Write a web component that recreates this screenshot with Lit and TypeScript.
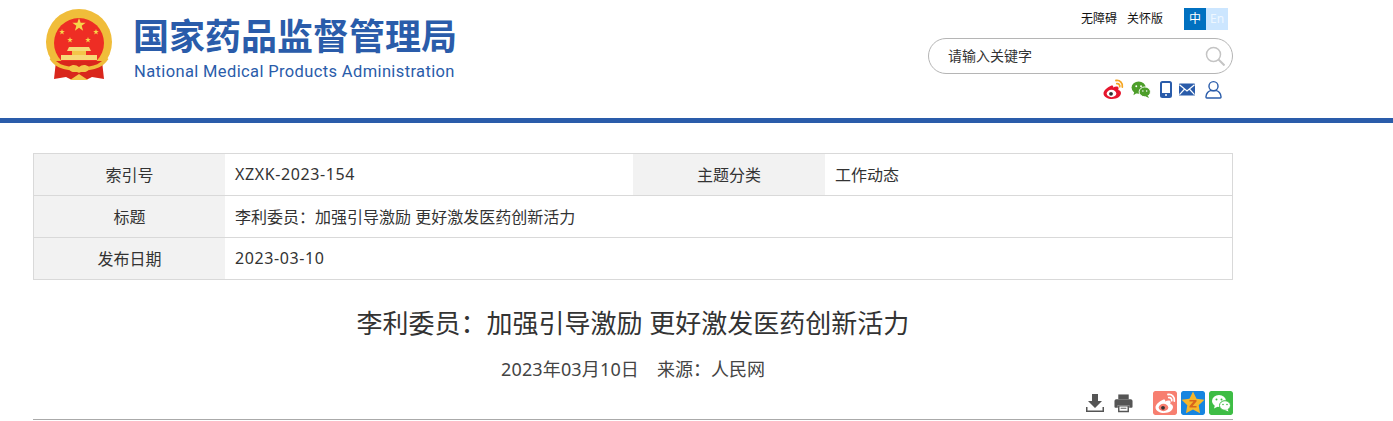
import { LitElement, html, css, svg } from "lit";
import { customElement } from "lit/decorators.js";

const COLON = "\uff1a";
const star = (cx: number, cy: number, r: number, fill: string, inner = 0.4) => {
  const pts: string[] = [];
  for (let i = 0; i < 10; i++) {
    const a = (-90 + i * 36) * Math.PI / 180;
    const rr = i % 2 ? r * inner : r;
    pts.push(`${(cx + rr * Math.cos(a)).toFixed(2)},${(cy + rr * Math.sin(a)).toFixed(2)}`);
  }
  return svg`<polygon points=${pts.join(" ")} fill=${fill}></polygon>`;
};

@customElement("app-root")
export class AppRoot extends LitElement {
  static styles = css`
    :host { display: block; width: 1393px; height: 421px; overflow: hidden; background: #fff;
      font-family: "Noto Sans", "Noto Sans CJK SC", sans-serif; color: #333; }
    .header { height: 118px; border-bottom: 5px solid #2a5caa; display: flex; justify-content: space-between; padding: 0 160px 0 45px; }
    .brand { display: flex; align-items: flex-start; gap: 21px; padding-top: 9px; }
    .emblem { display: block; width: 68px; height: 72px; }
    .names { display: flex; flex-direction: column; padding-top: 7px; color: #2a5caa; }
    .cn { font-size: 36px; line-height: 42px; font-weight: 700; white-space: nowrap; margin-left: -1px; }
    .en { font-family: "Roboto", sans-serif; font-size: 16.5px; line-height: 20px; margin-top: 4px; white-space: nowrap; letter-spacing: 0.37px; }
    .tools { width: 305px; display: flex; flex-direction: column; align-items: flex-end; padding-top: 8px; }
    .top { display: flex; align-items: center; height: 22px; font-size: 12px; color: #111; padding-right: 5px; }
    .top span { padding-bottom: 2px; }
    .top span + span { margin-left: 10px; }
    .lang { display: flex; margin-left: 21px; font-size: 12px; line-height: 22px; text-align: center; }
    .lang b { width: 22px; font-weight: 400; background: #0070c0; color: #fff; }
    .lang b + b { background: #cce6ff; color: #eef7ff; }
    .search { box-sizing: border-box; width: 305px; height: 36px; margin-top: 8px; border: 1px solid #b5b5b5; border-radius: 18px;
      display: flex; align-items: center; justify-content: space-between; padding: 0 7px 0 19px; font-size: 14px; color: #333; }
    .search svg { width: 20px; height: 20px; display: block; }
    .search span { padding-bottom: 2px; }
    .social { display: flex; align-items: center; gap: 8px; height: 26px; margin-top: 2px; padding-right: 11px; }
    .social svg { display: block; }
    .social .wechat { margin-left: -1px; }
    .social .phone { margin-left: 1px; }
    .social .mail { margin-left: -1px; }
    .social .user { margin-left: 2px; }
    .main { width: 1200px; margin-left: 33px; padding-top: 30px; }
    table { width: 1200px; border-collapse: separate; border-spacing: 0; table-layout: fixed; font-size: 16px;
      border-top: 1px solid #d9d9d9; border-left: 1px solid #d9d9d9; }
    td { height: 42px; border-bottom: 1px solid #d9d9d9; padding: 0 10px 2px; box-sizing: border-box; white-space: nowrap; }
    tr td:last-child { border-right: 1px solid #d9d9d9; }
    td.k { background: #f2f2f2; text-align: center; }
    col.c1 { width: 191px; }
    col.c2 { width: 408px; }
    col.c3 { width: 192px; }
    .lat { letter-spacing: 0.6px; }
    h1 { margin: 23px 0 0; font-size: 26px; font-weight: 400; line-height: 40px; text-align: center; color: #333; }
    .meta { margin-top: 13px; font-size: 18px; line-height: 26px; text-align: center; color: #444; }
    .meta span + span { margin-left: 18px; }
    .meta .date { letter-spacing: 0.15px; }
    .actions { display: flex; justify-content: flex-end; align-items: flex-start; margin-top: 9px; height: 28px; border-bottom: 1px solid #aaa; }
    .actions svg { display: block; }
    .dl { margin-top: 2px; }
    .share { width: 24px; height: 24px; border-radius: 2px; margin-left: 4px; display: block; }
    .gap { margin-left: 9px; margin-top: 2px; }
    .gap2 { margin-left: 20px !important; }
  `;

  weibo(fill: string, eye: string, wave: string) {
    return svg`<path d="M9.5 8.500c-4 1.500-8 5-8 8 0 3.500 4.500 5.500 8.500 5.500 5.500 0 9-3 9-6 0-2-1.800-2.800-2.800-3 .6-1.300.5-2.600-.4-3.200-1-.7-3.200-.2-4.800.8 .5-1.500.3-2.600-1.500-2.100z" fill=${fill}/>
      <ellipse cx="9.500" cy="16.500" rx="4.800" ry="3.700" fill=${eye}/><circle cx="9" cy="16.800" r="1.900" fill="#333"/>
      <path d="M14 3.500c4-.6 7 2.500 6.300 6.500M14.800 6.700c1.900-.3 3.300 1.100 2.900 3" fill="none" stroke=${wave} stroke-width="1.800" stroke-linecap="round"/>`;
  }

  render() {
    const title = `李利委员${COLON}加强引导激励 更好激发医药创新活力`;
    return html`
      <div class="header">
        <div class="brand">
          <svg class="emblem" viewBox="0 0 68 72">
            <path d="M10.300 56A33 33 0 1 1 57.700 56Z" fill="#f0bd3a"/>
            <circle cx="34" cy="34" r="25" fill="#ee2d24"/>
            ${star(34, 16, 7, "#f6d64a")}
            ${star(17, 23, 3, "#f6d64a")}
            ${star(51, 23, 3, "#f6d64a")}
            ${star(25, 31, 3, "#f6d64a")}
            ${star(43, 31, 3, "#f6d64a")}
            <path d="M24 38h20l2 4H22z" fill="#f7d977"/>
            <path d="M27 42h14v4H27z" fill="#f3c64a"/>
            <path d="M16 46h36v5H16z" fill="#f7d977"/>
            <path d="M11 52 9 70l12-2 6 3h14l6-3 12 2-2-18z" fill="#d9261c"/>
            <path d="M6 49C14 61 25 58 34 62 43 58 54 61 62 49" fill="none" stroke="#f0bd3a" stroke-width="3.500"/>
            <path d="M24 58c4-3 7-2 10 0 3-2 6-3 10 0 0 3-2 5-5 5H29c-3 0-5-2-5-5z" fill="#f3c64a"/>
            <path d="M25 71l9-6 9 6z" fill="#f3c64a"/>
          </svg>
          <div class="names">
            <div class="cn">国家药品监督管理局</div>
            <div class="en">National Medical Products Administration</div>
          </div>
        </div>
        <div class="tools">
          <div class="top">
            <span>无障碍</span><span>关怀版</span>
            <div class="lang"><b>中</b><b>En</b></div>
          </div>
          <div class="search">
            <span>请输入关键字</span>
            <svg viewBox="0 0 20 20" fill="none" stroke="#c4c4c4" stroke-width="1.500"><circle cx="8.500" cy="8.500" r="7"/><path d="M13.500 13.500l6 6" stroke-width="2"/></svg>
          </div>
          <div class="social">
            <svg width="22" height="20" viewBox="0 2 22 20">${this.weibo("#e6162d", "#fff", "#f5a623")}</svg>
            <svg class="wechat" width="20" height="17" viewBox="0 0 20 18">
              <ellipse cx="7.500" cy="7" rx="7.500" ry="6.500" fill="#4d9e2a"/><path d="M3 11l-1 4 4-2.500z" fill="#4d9e2a"/>
              <ellipse cx="14" cy="11.500" rx="6" ry="5.200" fill="#4d9e2a" stroke="#fff" stroke-width="1"/><path d="M17 15l1.500 3-4-1.800z" fill="#4d9e2a"/>
              <circle cx="5" cy="5.500" r="1" fill="#fff"/><circle cx="10" cy="5.500" r="1" fill="#fff"/><circle cx="12" cy="10.500" r=".8" fill="#fff"/><circle cx="16" cy="10.500" r=".8" fill="#fff"/>
            </svg>
            <svg class="phone" width="12" height="17" viewBox="0 0 12 17"><rect x="1" y="1" width="10" height="15" rx="1.500" fill="none" stroke="#2a5caa" stroke-width="2"/><rect x="1" y="12" width="10" height="4" fill="#2a5caa"/><circle cx="6" cy="14" r="1" fill="#fff"/></svg>
            <svg class="mail" width="16" height="13" viewBox="0 0 17 13"><rect width="17" height="13" rx="1" fill="#2a5caa"/><path d="M0.500 1.500L8.500 8l8-6.500M.5 12L6 6M16.500 12L11 6" fill="none" stroke="#fff" stroke-width="1.300"/></svg>
            <svg class="user" width="17" height="19" viewBox="0 0 18 19" fill="none" stroke="#2a5caa" stroke-width="1.500"><circle cx="9" cy="6" r="4.800"/><path d="M1 17.500c0-4 3-6.500 5-6.800h6c2 .3 5 2.800 5 6.800 0 .6-.4 1-1 1H2c-.6 0-1-.4-1-1z"/></svg>
          </div>
        </div>
      </div>
      <div class="main">
        <table>
          <colgroup><col class="c1"><col class="c2"><col class="c3"><col></colgroup>
          <tr><td class="k">索引号</td><td><span class="lat">XZXK-2023-154</span></td><td class="k">主题分类</td><td>工作动态</td></tr>
          <tr><td class="k">标题</td><td colspan="3">${title}</td></tr>
          <tr><td class="k">发布日期</td><td colspan="3"><span class="lat">2023-03-10</span></td></tr>
        </table>
        <h1>${title}</h1>
        <div class="meta"><span class="date">2023年03月10日</span><span>来源${COLON}人民网</span></div>
        <div class="actions">
          <svg class="dl" width="20" height="20" viewBox="0 0 20 20" fill="#555"><path d="M7 1h6v7h4l-7 7-7-7h4z"/><path d="M1 14v5h18v-5h-1.500v3.500h-15V14z"/></svg>
          <svg class="gap" width="19" height="20" viewBox="0 0 20 20" fill="#555"><rect x="4.500" y="1" width="11" height="5"/><path d="M2 6h16a2 2 0 0 1 1.500 2v6a1 1 0 0 1-1 1H16v-3H4v3H1.500a1 1 0 0 1-1-1V8A2 2 0 0 1 2 6z"/><path d="M5 13h10v6H5z" fill="#fff" stroke="#555" stroke-width="1.500"/><path d="M7 15h6v1H7z"/></svg>
          <svg class="share gap2" viewBox="0 0 24 24"><rect width="24" height="24" rx="2" fill="#f77f70"/><g transform="translate(1 0)">${this.weibo("#fff", "#f77f70", "#fff")}</g></svg>
          <svg class="share" viewBox="0 0 24 24"><rect width="24" height="24" rx="2" fill="#1685e0"/>${star(12, 12.5, 12, "#f5b62a", 0.5)}<path d="M8.500 9h7v1.500l-4 4.500h4v1.500h-7V15l4-4.500h-4z" fill="#d9641c"/></svg>
          <svg class="share" viewBox="0 0 24 24"><rect width="24" height="24" rx="2" fill="#3ebd45"/>
            <ellipse cx="10" cy="10" rx="7" ry="6" fill="#fff"/><path d="M6 14l-1 3.500 4-2z" fill="#fff"/>
            <ellipse cx="16" cy="14.500" rx="5.500" ry="4.800" fill="#fff" stroke="#3ebd45"/><path d="M18.500 18l1 2.500-3.500-1.500z" fill="#fff"/>
            <circle cx="7.500" cy="8.500" r="1" fill="#3ebd45"/><circle cx="12.500" cy="8.500" r="1" fill="#3ebd45"/><circle cx="14" cy="13.500" r=".8" fill="#3ebd45"/><circle cx="18" cy="13.500" r=".8" fill="#3ebd45"/></svg>
        </div>
      </div>
    `;
  }
}
